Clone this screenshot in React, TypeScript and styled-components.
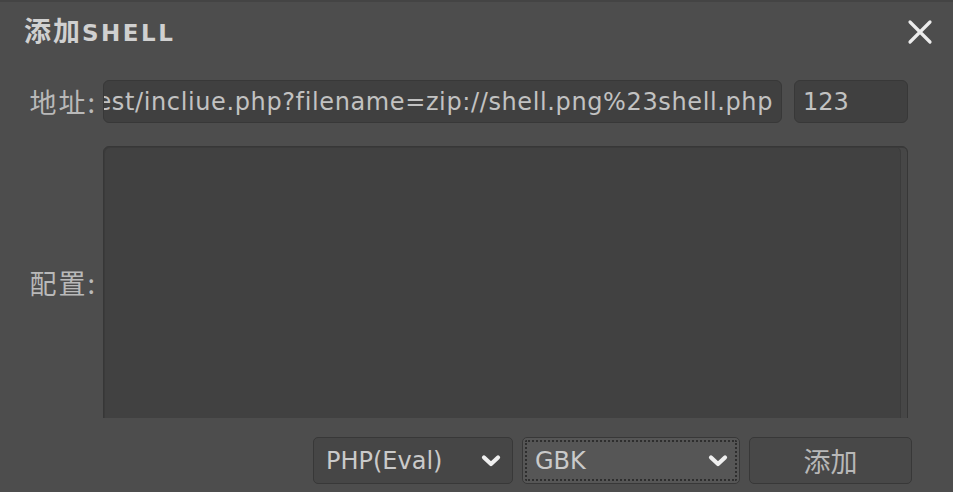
import React from "react";
import styled, { createGlobalStyle } from "styled-components";

const Global = createGlobalStyle`
  html, body {
    margin: 0;
    padding: 0;
    background: #4d4d4d;
    width: 953px;
    height: 492px;
    overflow: hidden;
  }
  * { box-sizing: border-box; }
`;

const LATIN = `"DejaVu Sans", "Noto Sans CJK SC", sans-serif`;
const CJK = `"Noto Sans CJK SC", "DejaVu Sans", sans-serif`;

const Dialog = styled.div`
  width: 953px;
  height: 492px;
  background: #4d4d4d;
  border-top: 2px solid #444444;
  display: flex;
  flex-direction: column;
  font-family: ${LATIN};
`;

const Header = styled.div`
  height: 60px;
  display: flex;
  align-items: center;
  justify-content: space-between;
  padding: 0 20px 5px 24px;
`;

const Title = styled.div`
  display: flex;
  align-items: baseline;
  font-weight: bold;
  color: #d0d0d0;
`;

const TitleCjk = styled.span`
  font-family: ${CJK};
  font-size: 27px;
  letter-spacing: 2px;
`;

const TitleLatin = styled.span`
  font-size: 23px;
  letter-spacing: 2.5px;
`;

const CloseButton = styled.button`
  width: 26px;
  height: 26px;
  padding: 0;
  margin-top: 5px;
  border: none;
  background: transparent;
  display: flex;
  align-items: center;
  justify-content: center;
`;

const Form = styled.div`
  display: grid;
  grid-template-columns: 103px minmax(0, 1fr);
  grid-template-rows: 43px 272px;
  row-gap: 23px;
  margin-top: 18px;
  padding-right: 45px;
`;

const Label = styled.div`
  font-family: ${CJK};
  font-size: 27px;
  color: #b9b9b9;
  display: flex;
  align-items: center;
  justify-content: flex-end;
  padding-right: 8px;
`;

const LabelChars = styled.span`
  letter-spacing: 2px;
`;

const FieldRow = styled.div`
  display: flex;
  gap: 12px;
  min-width: 0;
`;

const Field = styled.div<{ $end?: boolean; $width?: number }>`
  height: 43px;
  ${(p) => (p.$width ? `width: ${p.$width}px; flex: none;` : "flex: 1;")}
  min-width: 0;
  background: #404040;
  border: 1px solid #383838;
  border-radius: 6px;
  padding: 0 8px;
  display: flex;
  align-items: center;
  justify-content: ${(p) => (p.$end ? "flex-end" : "flex-start")};
  overflow: hidden;
  white-space: nowrap;
  font-size: 24px;
  letter-spacing: ${(p) => (p.$end ? "0.62px" : "0")};
  color: #c2c2c2;
`;

const AreaClip = styled.div`
  overflow: hidden;
  height: 272px;
  min-width: 0;
`;

const TextArea = styled.div`
  height: 320px;
  background: #414141;
  border: 1px solid #373737;
  border-radius: 6px;
  box-shadow: inset 1px 1px 0 #3b3b3b, inset -6px 0 0 #474747, inset -7px 0 0 #3b3b3b;
`;

const Actions = styled.div`
  display: flex;
  justify-content: flex-end;
  gap: 9px;
  margin-top: 19px;
  padding-right: 41px;
`;

const Select = styled.div<{ $width: number; $focused?: boolean }>`
  position: relative;
  width: ${(p) => p.$width}px;
  height: 47px;
  background: ${(p) => (p.$focused ? "#565656" : "#464646")};
  border: 1px solid #383838;
  border-radius: 5px;
  padding: 0 11px 0 12px;
  display: flex;
  align-items: center;
  justify-content: space-between;
  font-size: 24px;
  color: #cacaca;
  ${(p) => (p.$focused ? "outline: 2px dotted #2e2e2e; outline-offset: -5px;" : "")}
`;

const Button = styled.button`
  width: 163px;
  height: 47px;
  background: #484848;
  border: 1px solid #383838;
  border-radius: 5px;
  font-family: ${CJK};
  font-size: 27px;
  color: #b8b8b8;
  display: flex;
  align-items: center;
  justify-content: center;
  padding: 0;
`;

const Chevron = () => (
  <svg width="20" height="14" viewBox="0 0 20 14">
    <polyline
      points="3,3.5 10,10 17,3.5"
      fill="none"
      stroke="#efefef"
      strokeWidth="4.2"
      strokeLinecap="round"
      strokeLinejoin="round"
    />
  </svg>
);

export default function App() {
  return (
    <>
      <Global />
      <Dialog>
        <Header>
          <Title>
            <TitleCjk>添加</TitleCjk>
            <TitleLatin>SHELL</TitleLatin>
          </Title>
          <CloseButton aria-label="close">
            <svg width="26" height="26" viewBox="0 0 26 26">
              <path
                d="M3 3 L23 23 M23 3 L3 23"
                stroke="#ececec"
                strokeWidth="3.2"
                strokeLinecap="round"
              />
            </svg>
          </CloseButton>
        </Header>
        <Form>
          <Label>
            <LabelChars>地址</LabelChars>:
          </Label>
          <FieldRow>
            <Field $end>http://127.0.0.1/test/incliue.php?filename=zip://shell.png%23shell.php</Field>
            <Field $width={114}>123</Field>
          </FieldRow>
          <Label>
            <LabelChars>配置</LabelChars>:
          </Label>
          <AreaClip>
            <TextArea />
          </AreaClip>
        </Form>
        <Actions>
          <Select $width={200}>
            <span>PHP(Eval)</span>
            <Chevron />
          </Select>
          <Select $width={218} $focused>
            <span>GBK</span>
            <Chevron />
          </Select>
          <Button>添加</Button>
        </Actions>
      </Dialog>
    </>
  );
}
